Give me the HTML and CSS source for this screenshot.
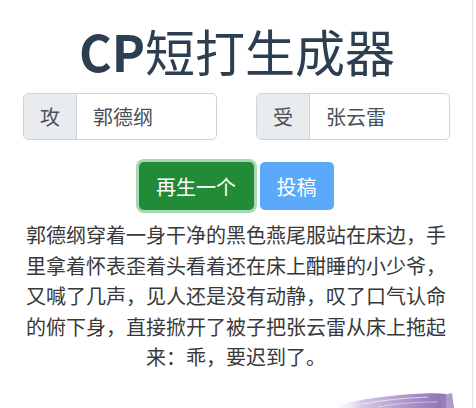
FILE: index.html
```html
<!DOCTYPE html>
<html lang="zh-CN">
<head>
<meta charset="utf-8">
<title>CP短打生成器</title>
<link rel="stylesheet" href="styles.css">
</head>
<body>
<div class="page">
  <h1 class="title"><span class="latin">CP</span>短打生成器</h1>
  <div class="inputs">
    <div class="input-group">
      <span class="addon">攻</span>
      <span class="field">郭德纲</span>
    </div>
    <div class="input-group">
      <span class="addon">受</span>
      <span class="field">张云雷</span>
    </div>
  </div>
  <div class="actions">
    <button class="btn btn-green" type="button">再生一个</button>
    <button class="btn btn-blue" type="button">投稿</button>
  </div>
  <p class="story">郭德纲穿着一身干净的黑色燕尾服站在床边，手里拿着怀表歪着头看着还在床上酣睡的小少爷，又喊了几声，见人还是没有动静，叹了口气认命的俯下身，直接掀开了被子把张云雷从床上拖起来：乖，要迟到了。</p>
  <svg class="swash" width="140" height="24" viewBox="0 0 140 24" aria-hidden="true">
    <defs>
      <linearGradient id="sw" x1="0" y1="0" x2="1" y2="0">
        <stop offset="0" stop-color="#ffffff" stop-opacity="0"/>
        <stop offset="0.3" stop-color="#d3c6e2"/>
        <stop offset="0.75" stop-color="#a48cc4"/>
        <stop offset="1" stop-color="#8c70b2"/>
      </linearGradient>
    </defs>
    <path d="M0 24 C25 16 55 12 85 10 C100 9 110 9 118 10 L118 24 Z" fill="url(#sw)"/>
    <path d="M35 20 C55 16 75 14 100 13" stroke="#ffffff" stroke-opacity="0.6" stroke-width="1.2" fill="none"/>
    <path d="M50 23 C70 19 90 18 110 18" stroke="#ffffff" stroke-opacity="0.45" stroke-width="1" fill="none"/>
    <path d="M112 12 L124 9 L126 24 L113 24 Z" fill="#9a82bd" opacity="0.8"/>
  </svg>
</div>
</body>
</html>
```
FILE: styles.css
```css
html, body {
  margin: 0;
  padding: 0;
  background: #ffffff;
}

.page {
  position: relative;
  width: 472px;
  height: 408px;
  border-right: 1px solid #e3e3e3;
  overflow: hidden;
  font-family: "Noto Sans CJK SC", "Noto Sans", sans-serif;
  color: #333333;
}

.title {
  margin: 0;
  padding-top: 20px;
  padding-left: 2px;
  text-align: center;
  font-size: 50px;
  line-height: 60px;
  font-weight: 400;
  color: #2c3e50;
}

.title .latin {
  font-weight: 700;
}

.inputs {
  display: flex;
  gap: 39px;
  padding-left: 23px;
  margin-top: 13px;
}

.input-group {
  display: flex;
  width: 192px;
  height: 45px;
  border: 1px solid #ced4da;
  border-radius: 5px;
  overflow: hidden;
  font-size: 20px;
  line-height: 45px;
  color: #495057;
}

.addon {
  width: 52px;
  text-align: center;
  background: #e9ecef;
  border-right: 1px solid #ced4da;
}

.field {
  padding-left: 16px;
  background: #ffffff;
}

.actions {
  display: flex;
  justify-content: center;
  gap: 6px;
  margin-top: 22px;
}

.btn {
  height: 48px;
  border: 0;
  border-radius: 5px;
  font-family: "Noto Sans CJK SC", "Noto Sans", sans-serif;
  font-size: 20px;
  color: #ffffff;
  padding: 0;
}

.btn-green {
  width: 115px;
  background: #218b37;
  box-shadow: 0 0 0 3px #a6d9b1;
}

.btn-blue {
  width: 74px;
  background: #5aa9fb;
}

.story {
  margin: 10px 0 0;
  padding: 0 24px;
  text-align: center;
  font-size: 20px;
  line-height: 30.6px;
  color: #383838;
}

.swash {
  position: absolute;
  right: 4px;
  bottom: 0;
}
```
